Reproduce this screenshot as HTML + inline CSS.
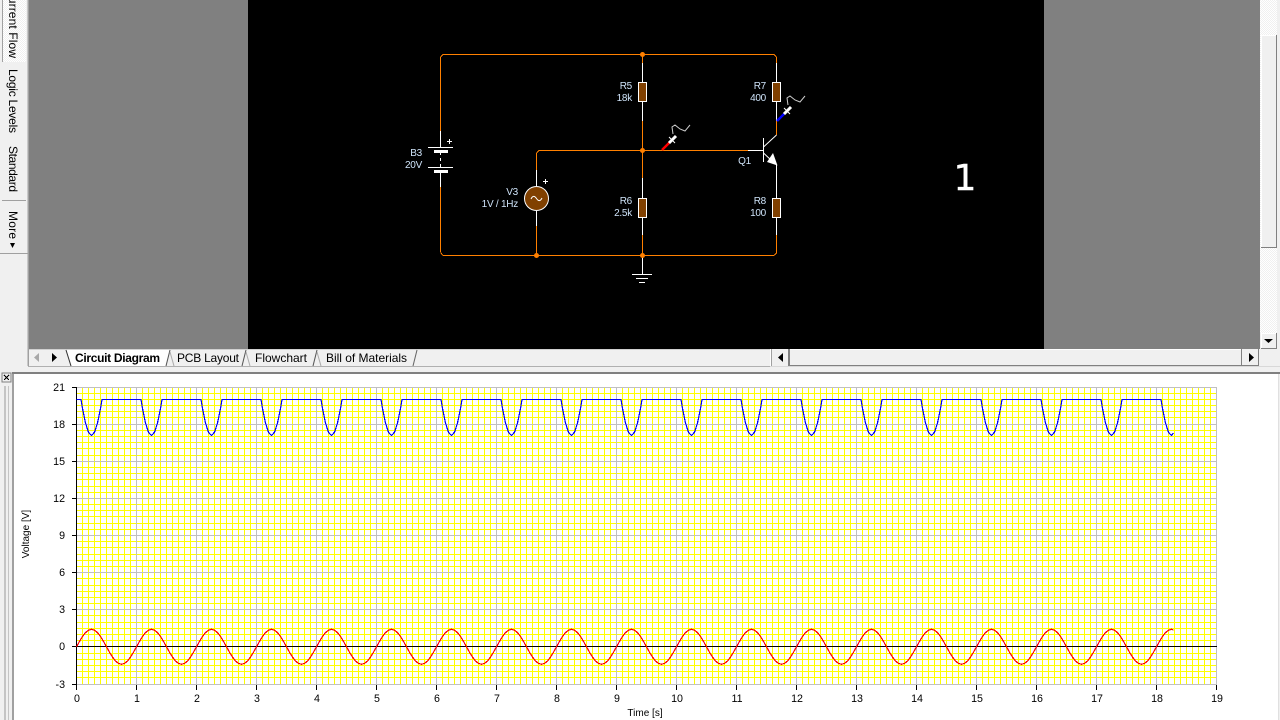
<!DOCTYPE html>
<html><head><meta charset="utf-8"><style>
html,body{margin:0;padding:0;background:#f0f0f0;overflow:hidden}
svg{display:block;position:absolute;left:0;top:0}
text{font-family:"Liberation Sans",sans-serif}
.c{font-size:10px;fill:#cfe4fa;text-anchor:end;letter-spacing:-.25px}
.t{font-size:12px;fill:#000}
.n{font-size:10.67px;fill:#000}
.o{fill:none;stroke:#ff8000;stroke-width:1}
.w{fill:none;stroke:#fff;stroke-width:1}
</style></head><body>
<svg width="1280" height="720" viewBox="0 0 1280 720" xmlns="http://www.w3.org/2000/svg">
<defs>
<pattern id="d" width="2" height="2" patternUnits="userSpaceOnUse"><rect width="2" height="2" fill="#fff"/><rect width="1" height="1" fill="#f0f0f0"/><rect x="1" y="1" width="1" height="1" fill="#f0f0f0"/></pattern>
<path id="rw" fill="none" stroke="#f00" stroke-width="1.2" d="M0 646.8L3 641.4L6 636.5L9 632.6L12 630.2L15 629.3L18 630.2L21 632.6L24 636.5L27 641.4L30 646.8L33 652.2L36 657.1L39 661L42 663.4L45 664.3L48 663.4L51 661L54 657.1L57 652.2L60 646.8"/>
<path id="bw" fill="none" stroke="#00f" stroke-width="1.2" d="M0 399.5H4.5L6 408.5L9 423L12 432.3L15 435.5L18 432.3L21 423L24 408.5L25.5 399.5H60"/>
<path id="v10" fill="none" stroke="#ffff00" d="M82.5 387v297m6-297v297m6-297v297m6-297v297m6-297v297m6-297v297m6-297v297m6-297v297m6-297v297"/>
</defs>
<rect width="1280" height="720" fill="#f0f0f0"/>

<g shape-rendering="crispEdges">
<rect x="29" y="0" width="1231" height="349" fill="#808080"/>
<rect x="248" y="0" width="796" height="349" fill="#000"/>
<rect x="28" y="0" width="1" height="366" fill="#a0a0a0"/>
<rect x="27" y="0" width="1" height="366" fill="#c8c8c8"/>
<!-- left tabs -->
<rect x="3" y="0" width="23" height="62" fill="url(#d)"/>
<rect x="2" y="0" width="1" height="62" fill="#a0a0a0"/>
<rect x="2" y="200" width="24" height="1" fill="#a0a0a0"/>
<rect x="0" y="253" width="28" height="1" fill="#a0a0a0"/>
<!-- v scrollbar -->
<rect x="1260" y="0" width="17" height="333" fill="url(#d)"/>
<rect x="1261" y="35" width="16" height="212" fill="#f0f0f0"/>
<rect x="1261" y="35" width="15" height="1" fill="#fff"/>
<rect x="1261" y="35" width="1" height="212" fill="#fff"/>
<rect x="1276" y="35" width="1" height="213" fill="#808080"/>
<rect x="1261" y="247" width="16" height="1" fill="#808080"/>
<rect x="1260" y="333" width="17" height="16" fill="#f0f0f0"/>
<rect x="1261" y="333" width="15" height="1" fill="#fff"/>
<rect x="1261" y="333" width="1" height="15" fill="#fff"/>
<rect x="1276" y="333" width="1" height="16" fill="#808080"/>
<rect x="1261" y="348" width="16" height="1" fill="#808080"/>
<!-- tab bar -->
<rect x="29" y="349" width="1251" height="17" fill="#f0f0f0"/>
<rect x="29" y="349" width="741" height="1" fill="#d0d0d0"/>
<rect x="28" y="366" width="742" height="1" fill="#b0b0b0"/>
<!-- h scrollbar -->
<rect x="770" y="349" width="1" height="17" fill="#fff"/>
<rect x="771" y="349" width="1" height="17" fill="#a0a0a0"/>
<rect x="772" y="349" width="17" height="17" fill="#f0f0f0"/>
<rect x="788" y="349" width="2" height="17" fill="#808080"/>
<rect x="790" y="349" width="452" height="16" fill="#f0f0f0"/>
<rect x="790" y="349" width="452" height="1" fill="#fff"/>
<rect x="790" y="365" width="453" height="1" fill="#808080"/>
<rect x="1241" y="349" width="1" height="17" fill="#808080"/>
<rect x="1243" y="349" width="16" height="16" fill="#f0f0f0"/>
<rect x="1258" y="349" width="1" height="17" fill="#808080"/>
<rect x="1243" y="365" width="16" height="1" fill="#808080"/>
<rect x="770" y="366" width="510" height="1" fill="#d8d8d8"/>
<!-- lower panel -->
<rect x="12" y="373" width="1268" height="347" fill="#a0a0a0"/>
<rect x="12" y="372" width="1268" height="2" fill="#808080"/>
<rect x="14" y="374" width="1264" height="346" fill="#fff"/>
<rect x="1278" y="374" width="1" height="346" fill="#e0e0e0"/>
<rect x="1279" y="374" width="1" height="346" fill="#f0f0f0"/>
<rect x="2" y="373" width="9" height="9" fill="#f0f0f0" stroke="#808080" stroke-width="1"/>
<rect x="4" y="386" width="2" height="334" fill="#c4c4c4"/>
<rect x="8" y="386" width="1" height="334" fill="#c4c4c4"/>
</g>
<path d="M4 375L9 380M9 375L4 380" stroke="#000" fill="none" shape-rendering="crispEdges"/>

<!-- tab bar shapes -->
<polygon points="66,350 170,350 166,366 71,366" fill="#fff"/>
<g fill="none" stroke-width="1">
<path d="M66 350L71 366" stroke="#333"/>
<path d="M170 350L166 366" stroke="#555"/>
<path d="M170 352L174 366" stroke="#aaa"/>
<path d="M246 350L242 366" stroke="#555"/>
<path d="M246 352L250 366" stroke="#aaa"/>
<path d="M317 350L313 366" stroke="#555"/>
<path d="M317 352L321 366" stroke="#aaa"/>
<path d="M417 350L413 366" stroke="#666"/>
</g>
<polygon points="39,353 39,362 34,357.5" fill="#a8a8a8"/>
<polygon points="52,353 52,362 57,357.5" fill="#000"/>
<polygon points="783,353 783,362 778,357.5" fill="#000"/>
<polygon points="1249,353 1249,362 1254,357.5" fill="#000"/>
<polygon points="1264,339 1273,339 1268.5,343" fill="#000"/>
<polygon points="10,243 15,243 12.5,248" fill="#000"/>

<text class="t" font-weight="bold" x="75" y="362" textLength="85" lengthAdjust="spacing">Circuit Diagram</text>
<text class="t" x="177" y="362" textLength="62" lengthAdjust="spacing">PCB Layout</text>
<text class="t" x="255" y="362" textLength="52" lengthAdjust="spacing">Flowchart</text>
<text class="t" x="326" y="362" textLength="81" lengthAdjust="spacing">Bill of Materials</text>

<text class="t" transform="translate(9,-12) rotate(90)" textLength="70" lengthAdjust="spacing">Current Flow</text>
<text class="t" transform="translate(9,69) rotate(90)" textLength="64" lengthAdjust="spacing">Logic Levels</text>
<text class="t" transform="translate(9,146) rotate(90)" textLength="46" lengthAdjust="spacing">Standard</text>
<text class="t" transform="translate(9,211) rotate(90)" textLength="28" lengthAdjust="spacing">More</text>

<!-- circuit -->
<g shape-rendering="crispEdges">
<path class="o" d="M443 54.5H774M440.5 57V131M440.5 187V252M443 255.5H774M776.5 57V63M776.5 121V135M776.5 235V253M642.5 54V63M642.5 121V178M642.5 235V255M536.5 170V153M539 150.5H748M536.5 226V255"/>
<path class="w" d="M440.5 131V147M440.5 153V155M440.5 158V161M440.5 164V167M440.5 171V187M428 147.5H453M428 167.5H453M536.5 170V186M536.5 211V226M642.5 63V82M642.5 101V121M642.5 178V198M642.5 217V235M642.5 256V274M632 274.5H652M636 278.5H648M639 282.5H645M776.5 63V82M776.5 101V121M776.5 217V235M776.5 164V198M748 150.5H763M763.5 138V162"/>
<rect x="434" y="150" width="14" height="3" fill="#fff"/>
<rect x="434" y="170" width="14" height="3" fill="#fff"/>
<rect x="638.5" y="82.5" width="8" height="19" fill="#804000" stroke="#fff"/>
<rect x="638.5" y="198.5" width="8" height="19" fill="#804000" stroke="#fff"/>
<rect x="772.5" y="82.5" width="8" height="19" fill="#804000" stroke="#fff"/>
<rect x="772.5" y="198.5" width="8" height="19" fill="#804000" stroke="#fff"/>
</g>
<g fill="none" stroke="#ff8000" shape-rendering="crispEdges">
<path d="M440.5 57L443 54.5M440.5 252.5L443 255.5M774 54.5L776.5 57M774 255.5L776.5 253M536.5 153L539 150.5"/>
</g>
<circle cx="536.5" cy="198.5" r="12" fill="#804000" stroke="#fff" stroke-width="1"/>
<path d="M531 199Q533.5 194 536.5 198.5T542 198" fill="none" stroke="#fff" stroke-width="1"/>
<g fill="#ff8000"><circle cx="642.5" cy="54.5" r="2.5"/><circle cx="642.5" cy="150.5" r="2.5"/><circle cx="642.5" cy="255.5" r="2.5"/><circle cx="536.5" cy="255.5" r="2.5"/></g>
<path d="M447 141.5H452M449.5 139V144M543 181.5H548M545.5 179V184" stroke="#fff" fill="none" shape-rendering="crispEdges"/>
<path d="M763.5 147L776.5 135M763.5 153L772 161" stroke="#fff" fill="none"/>
<polygon points="767,162 773,153 777.5,165.5" fill="#fff"/>

<!-- probes -->
<path d="M662 150L670 142" stroke="#f00" stroke-width="2.5" fill="none"/>
<path d="M669 143L676 136" stroke="#fff" stroke-width="3" fill="none"/>
<path d="M669 137L675 143" stroke="#fff" stroke-width="1" fill="none"/>
<path d="M673 134L672 127L675 125L680 129L685 131L690 125" stroke="#ccc" fill="none"/>
<path d="M777 121L785 113" stroke="#00f" stroke-width="2.5" fill="none"/>
<path d="M784 114L791 107" stroke="#fff" stroke-width="3" fill="none"/>
<path d="M784 108L790 114" stroke="#fff" stroke-width="1" fill="none"/>
<path d="M788 105L787 98L790 96L795 100L800 102L805 96" stroke="#ccc" fill="none"/>

<text class="c" x="422" y="156">B3</text>
<text class="c" x="422" y="168">20V</text>
<text class="c" x="518" y="195">V3</text>
<text class="c" x="518" y="207">1V / 1Hz</text>
<text class="c" x="632" y="89">R5</text>
<text class="c" x="632" y="101">18k</text>
<text class="c" x="632" y="204">R6</text>
<text class="c" x="632" y="216">2.5k</text>
<text class="c" x="766" y="89">R7</text>
<text class="c" x="766" y="101">400</text>
<text class="c" x="766" y="204">R8</text>
<text class="c" x="766" y="216">100</text>
<text class="c" x="751" y="164">Q1</text>
<text x="965" y="190" text-anchor="middle" style="font-family:'DejaVu Sans',sans-serif;font-size:36px;fill:#fff;stroke:#fff;stroke-width:.4">1</text>

<!-- plot -->
<g shape-rendering="crispEdges">
<rect x="76" y="387" width="1141" height="298" fill="#fff"/>
<path fill="none" stroke="#ffff00" d="M76 393.5H1216M76 399.5H1216M76 405.5H1216M76 411.5H1216M76 417.5H1216M76 430.5H1216M76 436.5H1216M76 442.5H1216M76 448.5H1216M76 455.5H1216M76 467.5H1216M76 473.5H1216M76 479.5H1216M76 486.5H1216M76 492.5H1216M76 504.5H1216M76 510.5H1216M76 516.5H1216M76 523.5H1216M76 529.5H1216M76 541.5H1216M76 547.5H1216M76 554.5H1216M76 560.5H1216M76 566.5H1216M76 578.5H1216M76 585.5H1216M76 591.5H1216M76 597.5H1216M76 603.5H1216M76 615.5H1216M76 622.5H1216M76 628.5H1216M76 634.5H1216M76 640.5H1216M76 653.5H1216M76 659.5H1216M76 665.5H1216M76 671.5H1216M76 677.5H1216"/>
<use href="#v10"/><use href="#v10" x="60"/><use href="#v10" x="120"/><use href="#v10" x="180"/><use href="#v10" x="240"/><use href="#v10" x="300"/><use href="#v10" x="360"/><use href="#v10" x="420"/><use href="#v10" x="480"/><use href="#v10" x="540"/><use href="#v10" x="600"/><use href="#v10" x="660"/><use href="#v10" x="720"/><use href="#v10" x="780"/><use href="#v10" x="840"/><use href="#v10" x="900"/><use href="#v10" x="960"/><use href="#v10" x="1020"/><use href="#v10" x="1080"/>
<path fill="none" stroke="#c0c0c0" d="M136.5 387V684M196.5 387V684M256.5 387V684M316.5 387V684M376.5 387V684M436.5 387V684M496.5 387V684M556.5 387V684M616.5 387V684M676.5 387V684M736.5 387V684M796.5 387V684M856.5 387V684M916.5 387V684M976.5 387V684M1036.5 387V684M1096.5 387V684M1156.5 387V684M1216.5 387V684M76 387.5H1217M76 424.5H1217M76 461.5H1217M76 498.5H1217M76 535.5H1217M76 572.5H1217M76 609.5H1217M76 684.5H1217"/>
<path fill="none" stroke="#000" d="M76.5 387V690M72 387.5H76M72 424.5H76M72 461.5H76M72 498.5H76M72 535.5H76M72 572.5H76M72 609.5H76M72 646.5H76M72 684.5H76M76 646.5H1217M136.5 685V690M196.5 685V690M256.5 685V690M316.5 685V690M376.5 685V690M436.5 685V690M496.5 685V690M556.5 685V690M616.5 685V690M676.5 685V690M736.5 685V690M796.5 685V690M856.5 685V690M916.5 685V690M976.5 685V690M1036.5 685V690M1096.5 685V690M1156.5 685V690M1216.5 685V690"/>
<g transform="translate(76.5,0)">
<use href="#rw"/><use href="#rw" x="60"/><use href="#rw" x="120"/><use href="#rw" x="180"/><use href="#rw" x="240"/><use href="#rw" x="300"/><use href="#rw" x="360"/><use href="#rw" x="420"/><use href="#rw" x="480"/><use href="#rw" x="540"/><use href="#rw" x="600"/><use href="#rw" x="660"/><use href="#rw" x="720"/><use href="#rw" x="780"/><use href="#rw" x="840"/><use href="#rw" x="900"/><use href="#rw" x="960"/><use href="#rw" x="1020"/>
<path fill="none" stroke="#f00" stroke-width="1.2" d="M1080 646.8L1083 641.4L1086 636.5L1089 632.6L1092 630.2L1095 629.3L1097 630"/>
<use href="#bw"/><use href="#bw" x="60"/><use href="#bw" x="120"/><use href="#bw" x="180"/><use href="#bw" x="240"/><use href="#bw" x="300"/><use href="#bw" x="360"/><use href="#bw" x="420"/><use href="#bw" x="480"/><use href="#bw" x="540"/><use href="#bw" x="600"/><use href="#bw" x="660"/><use href="#bw" x="720"/><use href="#bw" x="780"/><use href="#bw" x="840"/><use href="#bw" x="900"/><use href="#bw" x="960"/><use href="#bw" x="1020"/>
<path fill="none" stroke="#00f" stroke-width="1.2" d="M1080 399.5H1084.5L1086 408.5L1089 423L1092 432.3L1095 435.5L1097 433"/>
</g>
</g>

<g text-anchor="end">
<text class="n" x="65" y="391">21</text>
<text class="n" x="65" y="428">18</text>
<text class="n" x="65" y="465">15</text>
<text class="n" x="65" y="502">12</text>
<text class="n" x="65" y="539">9</text>
<text class="n" x="65" y="576">6</text>
<text class="n" x="65" y="613">3</text>
<text class="n" x="65" y="650">0</text>
<text class="n" x="65" y="688">-3</text>
</g>
<g text-anchor="middle">
<text class="n" x="77" y="702">0</text><text class="n" x="137" y="702">1</text><text class="n" x="197" y="702">2</text><text class="n" x="257" y="702">3</text><text class="n" x="317" y="702">4</text><text class="n" x="377" y="702">5</text><text class="n" x="437" y="702">6</text><text class="n" x="497" y="702">7</text><text class="n" x="557" y="702">8</text><text class="n" x="617" y="702">9</text><text class="n" x="677" y="702">10</text><text class="n" x="737" y="702">11</text><text class="n" x="797" y="702">12</text><text class="n" x="857" y="702">13</text><text class="n" x="917" y="702">14</text><text class="n" x="977" y="702">15</text><text class="n" x="1037" y="702">16</text><text class="n" x="1097" y="702">17</text><text class="n" x="1157" y="702">18</text><text class="n" x="1217" y="702">19</text>
</g>
<text x="645" y="716" text-anchor="middle" style="font-size:10px;fill:#000">Time [s]</text>
<text transform="translate(29,534) rotate(-90)" text-anchor="middle" style="font-size:10px;fill:#000">Voltage [V]</text>
</svg>
</body></html>
